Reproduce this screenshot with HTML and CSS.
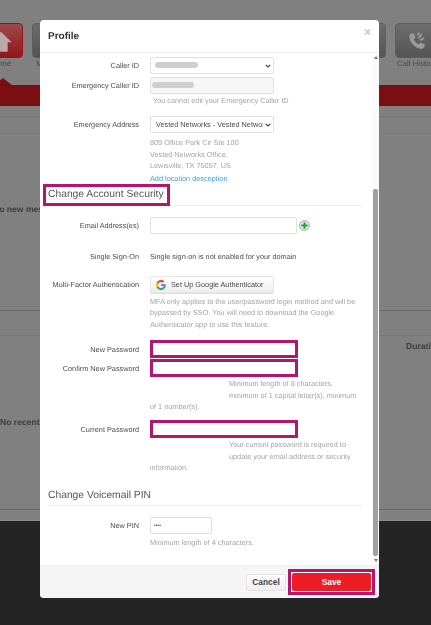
FILE: index.html
```html
<!DOCTYPE html>
<html lang="en">
<head>
    <meta charset="UTF-8">
    <meta name="viewport" content="width=device-width, initial-scale=1.0">
    <title>Profile</title>
    <link rel="stylesheet" href="styles.css">
</head>
<body>

    <div class="app">
        <div class="toolbar">
            <div class="tool tool-home">
                <div class="tile">
                    <svg viewBox="0 0 36 36" width="24" height="24"><path d="M18 4 L34 20 H28 V34 H8 V20 H2 Z" fill="#b9a9a9"/></svg>
                </div>
                <span>Home</span>
            </div>
            <div class="tool"><div class="tile"></div><span>Messages</span></div>
            <div class="tool-spacer"></div>
            <div class="tool"><div class="tile"></div><span>Fax</span></div>
            <div class="tool">
                <div class="tile">
                    <svg viewBox="0 0 36 36" width="26" height="26">
                        <path d="M9 8 L13 7 L16 13 L13.5 15.5 C15 19 17 21 20.5 22.5 L23 20 L29 23 L28 27 C26 29.500 22 29.500 17 26.500 C12 23.500 8 18 7.500 13 C7.300 11 7.800 9 9 8 Z" fill="#9a9a9a"/>
                        <path d="M20 14 L25 8 M22 17 L28 14 M19 10 L21 6" stroke="#9a9a9a" stroke-width="2.500" fill="none"/>
                    </svg>
                </div>
                <span>Call History</span>
            </div>
        </div>
        <div class="band-notch"></div>
        <div class="band"></div>
        <div class="panel panel-top">
            <div class="panel-head"></div>
            <p class="empty empty-messages">No new messages</p>
        </div>
        <div class="panel panel-bottom">
            <p class="duration">Duration</p>
            <p class="empty empty-calls">No recent calls</p>
        </div>
        <div class="footer"></div>
    </div>

    <div class="modal">
        <div class="modal-header">
            <h3>Profile</h3>
            <span class="close">&times;</span>
        </div>

        <div class="modal-main">
            <form class="modal-body">
                <div class="row row-caller">
                    <label>Caller ID</label>
                    <div class="select-wrap">
                        <select class="field"><option></option></select>
                        <span class="redacted redacted-select"></span>
                        <svg class="chevron" viewBox="0 0 6 4" width="6" height="4"><path d="M.8 .8 L3 3 L5.200 .8" fill="none" stroke="#444" stroke-width="1.200"/></svg>
                    </div>
                </div>
                <div class="row row-emergency">
                    <label>Emergency Caller ID</label>
                    <div class="select-wrap">
                        <input class="field field-disabled" type="text" disabled>
                        <span class="redacted redacted-input"></span>
                    </div>
                </div>
                <p class="help help-emergency">You cannot edit your Emergency Caller ID</p>

                <div class="row row-address">
                    <label>Emergency Address</label>
                    <div class="select-wrap">
                        <select class="field"><option>Vested Networks - Vested Networks Office</option></select>
                        <svg class="chevron" viewBox="0 0 6 4" width="6" height="4"><path d="M.8 .8 L3 3 L5.200 .8" fill="none" stroke="#444" stroke-width="1.200"/></svg>
                    </div>
                </div>
                <div class="address">
                    <p>809 Office Park Cir Ste 100</p>
                    <p>Vested Networks Office.</p>
                    <p>Lewisville, TX 75057, US</p>
                    <a href="#">Add location description</a>
                </div>

                <div class="section section-security">
                    <h4 class="marked">Change Account Security</h4>
                </div>

                <div class="row row-email">
                    <label>Email Address(es)</label>
                    <input class="field field-wide" type="text">
                    <span class="add-email">
                        <svg viewBox="0 0 12 12" width="11" height="11"><path d="M6 2.500 V9.500 M2.500 6 H9.500" stroke="#2aa52a" stroke-width="2.200"/></svg>
                    </span>
                </div>
                <div class="row row-sso">
                    <label>Single Sign-On</label>
                    <span class="value">Single sign-on is not enabled for your domain</span>
                </div>
                <div class="row row-mfa">
                    <label>Multi-Factor Authentication</label>
                    <button class="btn-google" type="button">
                        <svg viewBox="0 0 48 48" width="10" height="10">
                            <path fill="#ea4335" d="M24 9.500c3.500 0 6.700 1.200 9.200 3.600l6.900-6.900C35.900 2.400 30.500 0 24 0 14.600 0 6.500 5.400 2.600 13.200l8 6.200C12.400 13.700 17.700 9.500 24 9.500z"/>
                            <path fill="#4285f4" d="M46.900 24.500c0-1.600-.1-3.100-.4-4.500H24v9h12.900c-.6 3-2.200 5.500-4.700 7.200l7.700 6c4.500-4.200 7-10.300 7-17.700z"/>
                            <path fill="#fbbc05" d="M10.500 28.600c-.5-1.400-.8-3-.8-4.600s.3-3.100.8-4.600l-8-6.200C.9 16.500 0 20.100 0 24s.9 7.500 2.600 10.800l7.900-6.200z"/>
                            <path fill="#34a853" d="M24 48c6.500 0 11.900-2.100 15.900-5.800l-7.700-6c-2.100 1.400-4.900 2.300-8.200 2.300-6.300 0-11.600-4.200-13.500-9.900l-7.900 6.200C6.500 42.600 14.600 48 24 48z"/>
                        </svg>
                        Set Up Google Authenticator
                    </button>
                </div>
                <p class="help help-mfa">MFA only applies to the user/password login method and will be bypassed by SSO. You will need to download the Google Authenticator app to use this feature.</p>

                <div class="row row-new-password">
                    <label>New Password</label>
                    <input class="field field-wide marked-field" type="password">
                </div>
                <div class="row row-confirm">
                    <label>Confirm New Password</label>
                    <input class="field field-wide marked-field" type="password">
                </div>
                <p class="help help-password"><span class="indent"></span>Minimum length of 8 characters, minimum of 1 capital letter(s), minimum of 1 number(s).</p>

                <div class="row row-current">
                    <label>Current Password</label>
                    <input class="field field-wide marked-field" type="password">
                </div>
                <p class="help help-current"><span class="indent"></span>Your current password is required to update your email address or security information.</p>

                <div class="section section-pin">
                    <h4>Change Voicemail PIN</h4>
                </div>
                <div class="row row-pin">
                    <label>New PIN</label>
                    <input class="field field-pin" type="password" value="1234">
                </div>
                <p class="help help-pin">Minimum length of 4 characters.</p>
            </form>

            <div class="scrollbar">
                <span class="arrow arrow-up"></span>
                <div class="track"><div class="thumb"></div></div>
                <span class="arrow arrow-down"></span>
            </div>
        </div>

        <div class="modal-footer">
            <button class="btn-cancel" type="button">Cancel</button>
            <span class="save-mark"><button class="btn-save" type="button">Save</button></span>
        </div>
    </div>

</body>
</html>
```

FILE: styles.css
```css
* {
    box-sizing: border-box;
}
html, body {
    margin: 0;
    height: 100%;
    overflow: hidden;
}
body {
    font-family: "Liberation Sans", Arial, sans-serif;
    font-size: 7.3px;
    color: #4c4c4c;
    background-color: #242424;
    text-rendering: geometricPrecision;
}
p {
    margin: 0;
}

/* dimmed app behind the modal */
.app {
    height: 625px;
    display: flex;
    flex-direction: column;
    background-color: #808080;
    overflow: hidden;
    filter: blur(0.4px);
}
.toolbar {
    height: 78px;
    padding-top: 23px;
    display: flex;
    gap: 9px;
    margin-left: -21px;
    flex-shrink: 0;
}
.tool {
    width: 44px;
    flex-shrink: 0;
    text-align: center;
    font-size: 7.8px;
    color: #4a4a4a;
}
.tool span {
    display: block;
    margin-top: 1px;
    white-space: nowrap;
}
.tool-spacer {
    width: 248px;
    flex-shrink: 0;
}
.tile {
    height: 35px;
    display: flex;
    align-items: center;
    justify-content: center;
    border-radius: 4px;
    border: 1px solid #5e5e5e;
    background: linear-gradient(#6d6d6d, #545454);
}
.tool-home .tile {
    border-color: #a01218;
    background: linear-gradient(#9c4a4e, #96141b);
}
.band-notch {
    width: 0;
    height: 0;
    margin-left: -6px;
    border-left: 9px solid transparent;
    border-right: 9px solid transparent;
    border-bottom: 7px solid #7a0e12;
    flex-shrink: 0;
}
.band {
    height: 21px;
    background-color: #7a0e12;
    flex-shrink: 0;
}
.panel {
    border-bottom: 1px solid #6a6a6a;
    flex-shrink: 0;
}
.panel-top {
    height: 205px;
}
.panel-bottom {
    height: 175px;
    margin-top: 24px;
    border-top: 1px solid #767676;
}
.panel-head {
    height: 18px;
    margin-top: 10px;
    border-top: 1px solid #777;
    border-bottom: 1px solid #777;
}
.empty, .duration {
    font-size: 8.6px;
    font-weight: bold;
    color: #3d3d3d;
    white-space: nowrap;
}
.empty-messages {
    margin: 70px 0 0 -7px;
}
.duration {
    margin: 5px 0 0 406px;
}
.empty-calls {
    margin-top: 66px;
}
.footer {
    flex: 1;
    margin-top: 10px;
    background-color: #242424;
    border-top: 1px solid #8a8a8a;
}

/* modal */
.modal {
    position: absolute;
    left: 40px;
    top: 20px;
    width: 339px;
    height: 578px;
    display: flex;
    flex-direction: column;
    background-color: #fff;
    border-radius: 4px;
    overflow: hidden;
    filter: blur(0.4px);
}
.modal-header {
    height: 33px;
    padding: 1px 8px 0;
    display: flex;
    align-items: center;
    justify-content: space-between;
    border-bottom: 1px solid #eee;
    flex-shrink: 0;
}
.modal-header h3 {
    margin: 0;
    font-size: 10px;
    color: #333;
}
.close {
    align-self: flex-start;
    margin-top: 4px;
    font-size: 12px;
    font-weight: bold;
    color: #c4c4c4;
}
.modal-main {
    flex: 1;
    display: flex;
    min-height: 0;
}
.modal-body {
    flex: 1;
    padding: 4px 10px 0 8px;
    overflow: hidden;
}
.row {
    display: grid;
    grid-template-columns: 91px auto 1fr;
    column-gap: 11px;
    align-items: center;
}
.row label {
    text-align: right;
    white-space: nowrap;
}
.field {
    display: block;
    width: 124px;
    height: 17px;
    padding: 0 10px 0 5px;
    font: inherit;
    color: #4c4c4c;
    background-color: #fff;
    border: 1px solid #e0e0e0;
    border-radius: 2px;
}
select.field {
    appearance: none;
}
.field-disabled {
    background-color: #f6f6f6;
}
.field-wide {
    width: 147px;
}
.field-pin {
    width: 62px;
    padding: 0 3px;
    font-size: 5px;
}
.marked-field {
    width: 148px;
    height: 18px;
    border: 3px solid #b5156a;
    border-radius: 0;
}
.select-wrap {
    position: relative;
}
.chevron {
    position: absolute;
    right: 3px;
    top: 7px;
}
.redacted {
    position: absolute;
    height: 6px;
    border-radius: 3px;
    background-color: #cfcfcf;
}
.redacted-select {
    left: 5px;
    top: 5px;
    width: 43px;
}
.redacted-input {
    left: 2px;
    top: 5px;
    width: 42px;
}
.help {
    color: #a4a4a4;
    line-height: 11.4px;
}
.row-emergency {
    margin-top: 3px;
}
.help-emergency {
    margin: 1px 0 0 105px;
}
.row-address {
    margin-top: 10px;
}
.address {
    margin: 4px 0 0 102px;
    color: #a4a4a4;
    line-height: 11.4px;
}
.address a {
    display: block;
    margin-top: 1px;
    color: #3f9fd8;
    text-decoration: none;
}
.section {
    border-bottom: 1px solid #eee;
}
.section h4 {
    margin: 0;
    font-size: 10.3px;
    font-weight: normal;
    color: #555;
}
.section-security {
    height: 22px;
    margin-top: 0;
}
.section .marked {
    display: inline-block;
    height: 22px;
    margin-left: -5px;
    padding: 0 3px 0 2px;
    line-height: 16px;
    border: 3px solid #b5156a;
}
.row-email {
    margin-top: 11px;
}
.add-email {
    width: 11px;
    height: 11px;
    margin-left: -9px;
    display: flex;
    border-radius: 50%;
    border: 1px solid #aaa;
    background-color: #e6e6e6;
}
.add-email svg {
    margin: -1px;
    flex-shrink: 0;
}
.row-sso {
    margin-top: 18px;
}
.value {
    white-space: nowrap;
}
.row-mfa {
    margin-top: 15px;
}
.btn-google {
    width: 124px;
    height: 17px;
    padding: 0 0 0 5px;
    display: flex;
    align-items: center;
    gap: 5px;
    font: inherit;
    color: #4c4c4c;
    white-space: nowrap;
    background: linear-gradient(#fff, #eee);
    border: 1px solid #e6e6e6;
    border-radius: 2px;
    box-shadow: 0 1px 1px #ddd;
}
.btn-google svg {
    flex-shrink: 0;
}
.help-mfa {
    margin: 3px 0 0 102px;
    width: 212px;
}
.row-new-password {
    margin-top: 10px;
}
.row-confirm {
    margin-top: 1px;
}
.help-password {
    margin: 1px 0 0 102px;
    width: 212px;
}
.indent {
    float: left;
    width: 79px;
    height: 22px;
}
.row-current {
    margin-top: 8px;
}
.help-current {
    margin: 1px 0 0 102px;
    width: 212px;
}
.section-pin {
    height: 18px;
    margin-top: 14px;
    line-height: 16px;
}
.row-pin {
    margin-top: 11px;
}
.help-pin {
    margin: 3px 0 0 102px;
}

/* scrollbar */
.scrollbar {
    width: 7px;
    display: flex;
    flex-direction: column;
    align-items: center;
    background-color: #fafafa;
    flex-shrink: 0;
}
.arrow {
    width: 0;
    height: 0;
    border-left: 2.500px solid transparent;
    border-right: 2.500px solid transparent;
    flex-shrink: 0;
}
.arrow-up {
    margin-top: 3px;
    border-bottom: 3px solid #777;
}
.arrow-down {
    margin-bottom: 3px;
    border-top: 3px solid #777;
}
.track {
    flex: 1;
    width: 100%;
    padding: 130px 1px 3px;
    display: flex;
}
.thumb {
    flex: 1;
    border-radius: 2px;
    background-color: #a0a0a0;
}

/* footer */
.modal-footer {
    height: 33px;
    padding-right: 4px;
    display: flex;
    align-items: center;
    justify-content: flex-end;
    background-color: #f5f5f5;
    border-top: 1px solid #eee;
    flex-shrink: 0;
}
.btn-cancel, .btn-save {
    height: 17px;
    padding: 0;
    font: inherit;
    font-size: 8.4px;
    font-weight: bold;
    border-radius: 2px;
}
.btn-cancel {
    width: 40px;
    margin-right: 2px;
    color: #444;
    background: linear-gradient(#fff, #eee);
    border: 1px solid #e2e2e2;
}
.save-mark {
    display: flex;
    width: 87px;
    height: 26px;
    padding: 1px;
    border: 3px solid #b5156a;
    background-color: #fff;
}
.btn-save {
    flex: 1;
    height: auto;
    color: #fff;
    background-color: #ee1c25;
    border: none;
}
```
